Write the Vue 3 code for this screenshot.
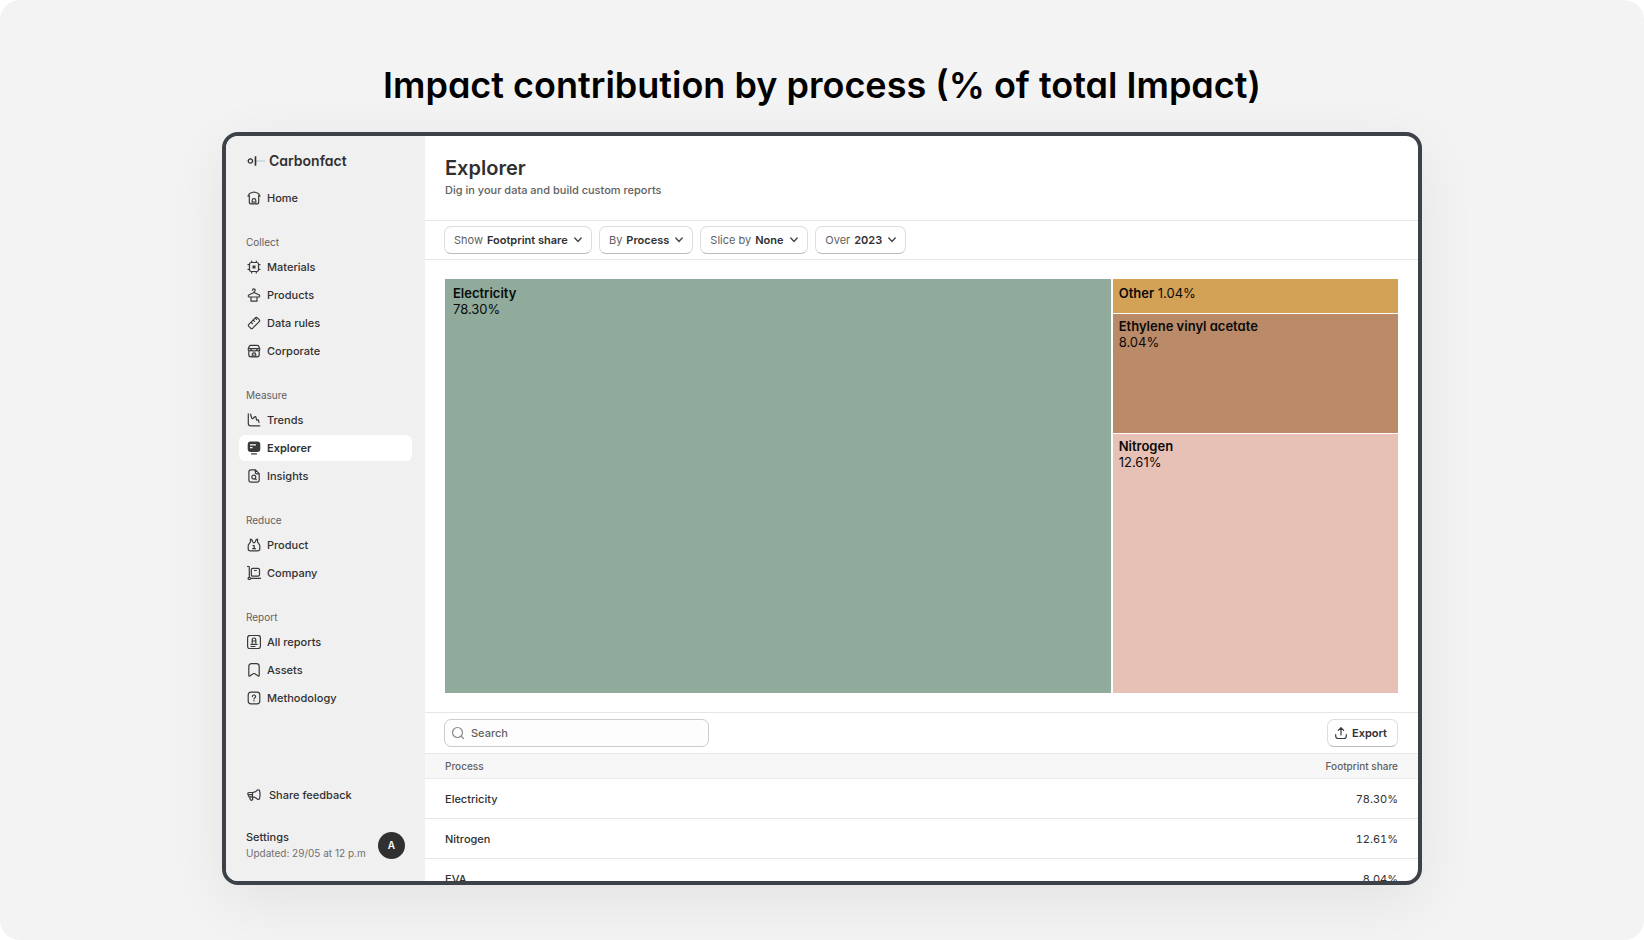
<script setup>
import { ref } from 'vue'

const icons = {
  home: { d: 'M1 5.2 2 3.2Q2.300 2.500 3 2.300L6 1.200Q7 .9 8 1.200L11 2.300Q11.700 2.500 12 3.200L13 5.200M2.300 4.500V11Q2.300 13 4.500 13H9.500Q11.700 13 11.700 11V4.500M5.200 13V9.500Q5.200 7.700 7 7.700T8.800 9.500V13M7 10.500V13' },
  chip: { d: 'M4.200 2.500H9.800Q11.500 2.500 11.500 4.200V9.800Q11.500 11.500 9.800 11.500H4.200Q2.500 11.500 2.500 9.800V4.200Q2.500 2.500 4.200 2.500ZM4.700 1V2.500M9.300 1V2.500M4.700 11.500V13M9.300 11.500V13M1 4.700H2.500M1 9.300H2.500M11.500 4.700H13M11.500 9.300H13', f: 'M5.500 5.500H8.500V8.500H5.500Z' },
  hanger: { d: 'M5.500 2.200Q5.500 .9 6.800 .9T8.200 2.200Q8.200 3 7.400 3.300Q7 3.500 7 4.500L11.800 6.700Q12.900 7.300 12.700 8.200Q12.400 9 11.400 9H2.600Q1.600 9 1.300 8.200Q1.100 7.300 2.200 6.700L7 4.500M4 9V13.200H10V9' },
  ruler: { d: 'M8.300 1.800Q9.300 .9 10.300 1.800L12.200 3.700Q13.100 4.700 12.200 5.700L5.700 12.200Q4.700 13.100 3.700 12.200L1.800 10.300Q.9 9.300 1.800 8.300ZM4 6.100 5.400 7.500M6.100 4 7.500 5.400M8.200 2 9.500 3.300' },
  store: { d: 'M3.700 1.300H10.300Q11.300 1.300 11.700 2.200L12.800 5V5.500Q12.800 6.900 11.400 6.900Q9.900 6.900 9.900 5.500Q9.900 6.900 8.500 6.900H5.500Q4.100 6.900 4.100 5.500Q4.100 6.900 2.600 6.900Q1.200 6.900 1.200 5.500V5L2.300 2.200Q2.700 1.300 3.700 1.300ZM1.500 4.700H12.500M1.800 7V10.800Q1.800 12.800 3.800 12.800H10.200Q12.200 12.800 12.200 10.800V7M5.200 12.800V10.500Q5.200 8.900 7 8.900T8.800 10.500V12.800M7 10.800V12.800' },
  trend: { d: 'M1.300 .8V10.500Q1.300 12.800 3.700 12.800H12.800M3.500 1.200 4.800 5Q5.300 6.200 6.200 5.300L7.800 3.800Q8.700 3.200 9 4.300L9.400 6.500Q9.700 7.500 10.500 6.900Q11.300 6.400 11.500 7.300L12 9.500' },
  screen: { d: 'M4.500 12.900H9.500', f: 'M3.700 .6H10.300Q13.300 .6 13.300 3.500V8Q13.300 10.900 10.300 10.900H3.700Q.7 10.900 .7 8V3.500Q.7 .6 3.700 .6ZM3 3.200V4.500H9V3.200ZM3 6V7.300H5.500V6Z' },
  insight: { d: 'M4 .9H8.500L12.200 4.600V11Q12.200 13.100 10.100 13.100H4Q1.900 13.100 1.900 11V3Q1.900 .9 4 .9ZM8.300 1.200V3.200Q8.300 4.800 9.900 4.800H12M9.200 10.500 8.200 9.400M8.800 8.100A2 2 0 1 1 4.800 8.100A2 2 0 1 1 8.800 8.100Z' },
  vest: { d: 'M3.400 1.200 3.500 3.300Q3.500 4.300 2.600 5.200L1.500 6.800Q1.200 7.500 1.200 8.300V10.800Q1.200 12.900 3.300 12.900H10.700Q12.800 12.900 12.800 10.800V8.300Q12.800 7.500 12.500 6.800L11.400 5.200Q10.500 4.300 10.500 3.300L10.600 1.200 9.300 1.500 8.300 3.800Q7 6 5.700 3.800L4.700 1.500ZM6 7.700H7.200V10.700M5.700 10.700H8.500' },
  dolly: { d: 'M.3 .5H1.500Q2.300 .5 2.300 1.300V11.300M3.600 12.400H14M5.700 2.300H11Q12.500 2.300 12.500 3.700V8.800Q12.500 10.200 11 10.200H5.700Q4.300 10.200 4.300 8.800V3.700Q4.300 2.300 5.700 2.300ZM7.500 4.500H9.300M3.500 12.400A1.200 1.200 0 1 1 1.100 12.400A1.200 1.200 0 1 1 3.500 12.400Z' },
  report: { d: 'M3.300 .3H10.700Q13.400 .3 13.400 2.800V11.200Q13.400 13.700 10.700 13.700H3.300Q.6 13.700 .6 11.200V2.800Q.6 .3 3.300 .3ZM5.200 8V4.700Q5.200 3 7 3T8.800 4.700V8M5.200 6H8.800M4 9.400H10M4 11.500H8' },
  bookmark: { d: 'M4.500 .7H9.500Q12.200 .7 12.200 3.400V12.400Q12.200 13.500 11.200 13L7.900 10.800Q7 10.200 6.100 10.800L2.800 13Q1.800 13.500 1.800 12.400V3.400Q1.800 .7 4.500 .7Z' },
  help: { d: 'M4 1.200H10Q12.800 1.200 12.800 4V10Q12.800 12.800 10 12.800H4Q1.200 12.800 1.200 10V4Q1.200 1.200 4 1.200ZM5.400 5.400Q5.500 4 7 4T8.600 5.400Q8.600 6.200 7.800 6.700Q7 7.100 7 7.900M7 9.700V10' },
  megaphone: { d: 'M1.800 4.500H5.500Q8.500 4.300 10.300 2.100Q11.700 1.200 12.500 2.600Q13.600 6.500 12.500 10.600Q11.700 12.100 10.300 11.100Q8.500 9 5.500 8.900H2.700Q1.700 8.900 1.500 7.800L.8 5.700Q.8 4.500 1.800 4.500ZM5.500 4.500V8.900M2.500 8.900 3.300 11.500Q3.700 12.500 4.800 12.200Q5.900 11.900 5.700 10.800L5.400 8.900M1.300 6.700H5.500' }
}

const groups = [
  { title: '', items: [['Home', 'home']] },
  { title: 'Collect', items: [['Materials', 'chip'], ['Products', 'hanger'], ['Data rules', 'ruler'], ['Corporate', 'store']] },
  { title: 'Measure', items: [['Trends', 'trend'], ['Explorer', 'screen'], ['Insights', 'insight']] },
  { title: 'Reduce', items: [['Product', 'vest'], ['Company', 'dolly']] },
  { title: 'Report', items: [['All reports', 'report'], ['Assets', 'bookmark'], ['Methodology', 'help']] }
]
const active = ref('Explorer')

const filters = [
  { id: 'show', label: 'Show', value: 'Footprint share' },
  { id: 'by', label: 'By', value: 'Process' },
  { id: 'slice', label: 'Slice by', value: 'None' },
  { id: 'over', label: 'Over', value: '2023' }
]

const tiles = [
  { name: 'Electricity', share: '78.30%', kind: 'electricity' },
  { name: 'Other', share: '1.04%', kind: 'other' },
  { name: 'Ethylene vinyl acetate', share: '8.04%', kind: 'eva' },
  { name: 'Nitrogen', share: '12.61%', kind: 'nitrogen' }
]

const rows = [
  ['Electricity', '78.30%'],
  ['Nitrogen', '12.61%'],
  ['EVA', '8.04%']
]
</script>

<template>
  <div class="page">
    <h1 class="headline">Impact contribution by process (% of total Impact)</h1>
    <div class="window">
      <aside class="sidebar">
        <a class="brand" href="#">
          <svg width="20" height="12" viewBox="0 0 20 12" aria-hidden="true">
            <path d="M0 6H2.500M6.500 6H19" stroke="#c5d3da" stroke-width="1.500" />
            <circle cx="4.400" cy="6" r="2.100" fill="none" stroke="#303030" stroke-width="1.200" />
            <path d="M9.500 1.300V10.700" stroke="#303030" stroke-width="1.600" />
          </svg>
          <span>Carbonfact</span>
        </a>
        <nav class="nav">
          <div v-for="g in groups" :key="g.title" class="group">
            <h2 v-if="g.title" class="group-title">{{ g.title }}</h2>
            <a
              v-for="[name, icon] in g.items"
              :key="name"
              href="#"
              class="item"
              :class="{ active: active === name }"
              @click.prevent="active = name"
            >
              <svg class="icon" viewBox="0 0 14 14" aria-hidden="true">
                <path :d="icons[icon].d" />
                <path v-if="icons[icon].f" class="solid" :d="icons[icon].f" />
              </svg>
              <span>{{ name }}</span>
            </a>
          </div>
        </nav>
        <a class="item feedback" href="#">
          <svg class="icon" viewBox="0 0 14 14" aria-hidden="true"><path :d="icons.megaphone.d" /></svg>
          <span>Share feedback</span>
        </a>
        <div class="account">
          <div>
            <a class="settings" href="#">Settings</a>
            <p class="updated">Updated: 29/05 at 12 p.m</p>
          </div>
          <button class="avatar" type="button" aria-label="Account">A</button>
        </div>
      </aside>

      <main class="main">
        <header class="header">
          <h2 class="title">Explorer</h2>
          <p class="subtitle">Dig in your data and build custom reports</p>
        </header>

        <div class="filters">
          <div v-for="f in filters" :key="f.id" class="filter">
            <label :for="f.id">{{ f.label }}</label>
            <select :id="f.id">
              <option>{{ f.value }}</option>
            </select>
            <svg class="chevron" viewBox="0 0 8 6" aria-hidden="true"><path d="M.8 1 4 4.400 7.200 1" /></svg>
          </div>
        </div>

        <section class="treemap" aria-label="Footprint share by process">
          <div v-for="t in tiles" :key="t.kind" class="tile" :class="t.kind">
            <strong>{{ t.name }}</strong>&#32;<span>{{ t.share }}</span>
          </div>
        </section>

        <div class="toolbar">
          <div class="search">
            <svg class="icon" viewBox="0 0 14 14" aria-hidden="true"><path d="M11.500 6.500A5 5 0 1 1 1.500 6.500A5 5 0 1 1 11.500 6.500ZM10.200 10.200 12.500 12.500" /></svg>
            <input type="search" placeholder="Search" aria-label="Search" />
          </div>
          <button class="export" type="button">
            <svg class="icon" viewBox="0 0 14 14" aria-hidden="true"><path d="M7 9V1.800M4.300 4.300 7 1.600 9.700 4.300M1.700 8.500V10Q1.700 12.500 4.200 12.500H9.800Q12.300 12.500 12.300 10V8.500" /></svg>
            Export
          </button>
        </div>

        <table class="table">
          <thead>
            <tr><th scope="col">Process</th><th scope="col" class="num">Footprint share</th></tr>
          </thead>
          <tbody>
            <tr v-for="[name, share] in rows" :key="name">
              <td>{{ name }}</td>
              <td class="num">{{ share }}</td>
            </tr>
          </tbody>
        </table>
      </main>
    </div>
  </div>
</template>

<style>
body {
  margin: 0;
  background: #fff;
}
</style>

<style scoped>
* {
  box-sizing: border-box;
}
h1,
h2,
p {
  margin: 0;
}
a {
  color: inherit;
  text-decoration: none;
}
button,
input,
select {
  font: inherit;
  color: inherit;
}
.page {
  display: flex;
  flex-direction: column;
  height: 100vh;
  padding: 61px 222px 55px;
  border-radius: 20px;
  background: #f3f3f3;
  font-family: Inter, "Liberation Sans", sans-serif;
  font-size: 11px;
  font-weight: 500;
  line-height: 16px;
  color: #303030;
}
.headline {
  margin-bottom: 23px;
  font-size: 36px;
  font-weight: 600;
  line-height: 48px;
  text-align: center;
  white-space: nowrap;
  color: #000;
  font-feature-settings: "cv11";
}
.window {
  display: flex;
  flex: 1;
  min-height: 0;
  overflow: hidden;
  border: 4px solid #3d4248;
  border-radius: 16px;
  background: #fff;
  box-shadow: 0 16px 60px rgba(0, 0, 0, 0.07);
}
.sidebar {
  display: flex;
  flex-direction: column;
  flex: none;
  width: 199px;
  padding: 13px 13px 20px;
  background: #f0f0f0;
}
.brand {
  display: flex;
  align-items: center;
  gap: 3px;
  height: 24px;
  margin-bottom: 11px;
  padding-left: 7px;
  font-size: 14px;
  font-weight: 600;
  font-feature-settings: "cv11";
}
.nav {
  display: flex;
  flex-direction: column;
  gap: 19px;
}
.group-title {
  padding-left: 7px;
  font-size: 10px;
  font-weight: 400;
  line-height: 22px;
  color: #616161;
}
.item {
  display: flex;
  align-items: center;
  gap: 6px;
  height: 28px;
  padding-left: 8px;
  border-radius: 6px;
}
.item.active {
  height: 26px;
  margin: 1px 0;
  background: #fff;
  font-weight: 600;
}
.icon {
  flex: none;
  width: 14px;
  height: 14px;
  fill: none;
  stroke: #3a3a3a;
  stroke-width: 1.2;
  stroke-linecap: round;
  stroke-linejoin: round;
}
.solid {
  fill: #3a3a3a;
  fill-rule: evenodd;
  stroke: none;
}
.feedback {
  gap: 8px;
  margin-top: auto;
}
.account {
  display: flex;
  align-items: center;
  justify-content: space-between;
  margin-top: 20px;
  padding: 0 7px;
}
.updated {
  font-size: 10px;
  font-weight: 400;
  color: #707070;
  white-space: nowrap;
}
.avatar {
  width: 27px;
  height: 27px;
  padding: 0;
  border: 0;
  border-radius: 50%;
  background: #303030;
  color: #fff;
  font-size: 10px;
  font-weight: 600;
}
.main {
  flex: 1;
  min-width: 0;
}
.header {
  height: 85px;
  padding: 19px 20px 0;
  border-bottom: 1px solid #e6e6e6;
}
.title {
  margin-bottom: 1px;
  font-size: 20px;
  font-weight: 600;
  line-height: 26px;
}
.subtitle {
  color: #616161;
}
.filters {
  display: flex;
  gap: 7px;
  padding: 5px 19px;
  border-bottom: 1px solid #e6e6e6;
}
.filter,
.export {
  display: flex;
  align-items: center;
  height: 28px;
  border: 1px solid #dedede;
  border-bottom-color: #bcbcbc;
  border-radius: 7px;
  background: #fff;
}
.filter {
  gap: 4px;
  padding: 0 9px;
}
.filter label {
  font-weight: 400;
  color: #616161;
}
.filter select {
  appearance: none;
  margin: 0 -16px 0 0;
  padding: 0 18px 0 0;
  border: 0;
  background: none;
  font-weight: 600;
}
.chevron {
  width: 8px;
  height: 6px;
  fill: none;
  stroke: #4a4a4a;
  stroke-width: 1.5;
  stroke-linecap: round;
  pointer-events: none;
}
.treemap {
  display: grid;
  grid-template-columns: 7fr 3fr;
  grid-template-rows: 34fr 119fr 258fr;
  gap: 1px 2px;
  height: 414px;
  margin: 19px 20px;
  color: #0a0a0a;
  font-size: 13px;
  font-weight: 400;
  font-feature-settings: "cv11";
}
.tile {
  padding: 4px 6px;
}
.tile strong {
  font-weight: 600;
}
.tile span {
  display: block;
}
.electricity {
  grid-row: 1 / 4;
  padding: 6px 8px;
  background: #90ab9c;
}
.other {
  padding: 6px;
  background: #d4a257;
}
.other span {
  display: inline;
}
.eva {
  background: #bb8a69;
}
.nitrogen {
  background: #e7c0b6;
}
.toolbar {
  display: flex;
  justify-content: space-between;
  padding: 6px 20px 6px 19px;
  border-top: 1px solid #e6e6e6;
}
.search {
  display: flex;
  align-items: center;
  gap: 6px;
  width: 265px;
  height: 28px;
  padding: 0 6px;
  border: 1px solid #cccccc;
  border-radius: 7px;
  background: #fdfdfd;
}
.search .icon {
  stroke: #8a8a8a;
}
.search input {
  flex: 1;
  min-width: 0;
  padding: 0;
  border: 0;
  outline: 0;
  background: none;
}
.search input::placeholder {
  color: #616161;
  opacity: 1;
}
.export {
  gap: 4px;
  padding: 0 10px 0 6px;
  font-weight: 600;
}
.table {
  width: 100%;
  border-collapse: separate;
  border-spacing: 0;
}
.table th {
  height: 26px;
  padding: 0 20px;
  border-top: 1px solid #e6e6e6;
  border-bottom: 1px solid #ebebeb;
  background: #f7f7f7;
  font-size: 10px;
  font-weight: 500;
  text-align: left;
  color: #616161;
}
.table td {
  height: 40px;
  padding: 0 20px;
  border-bottom: 1px solid #e6e6e6;
}
.table .num {
  text-align: right;
}
.table td.num {
  font-weight: 400;
  font-variant-numeric: tabular-nums;
}
</style>
